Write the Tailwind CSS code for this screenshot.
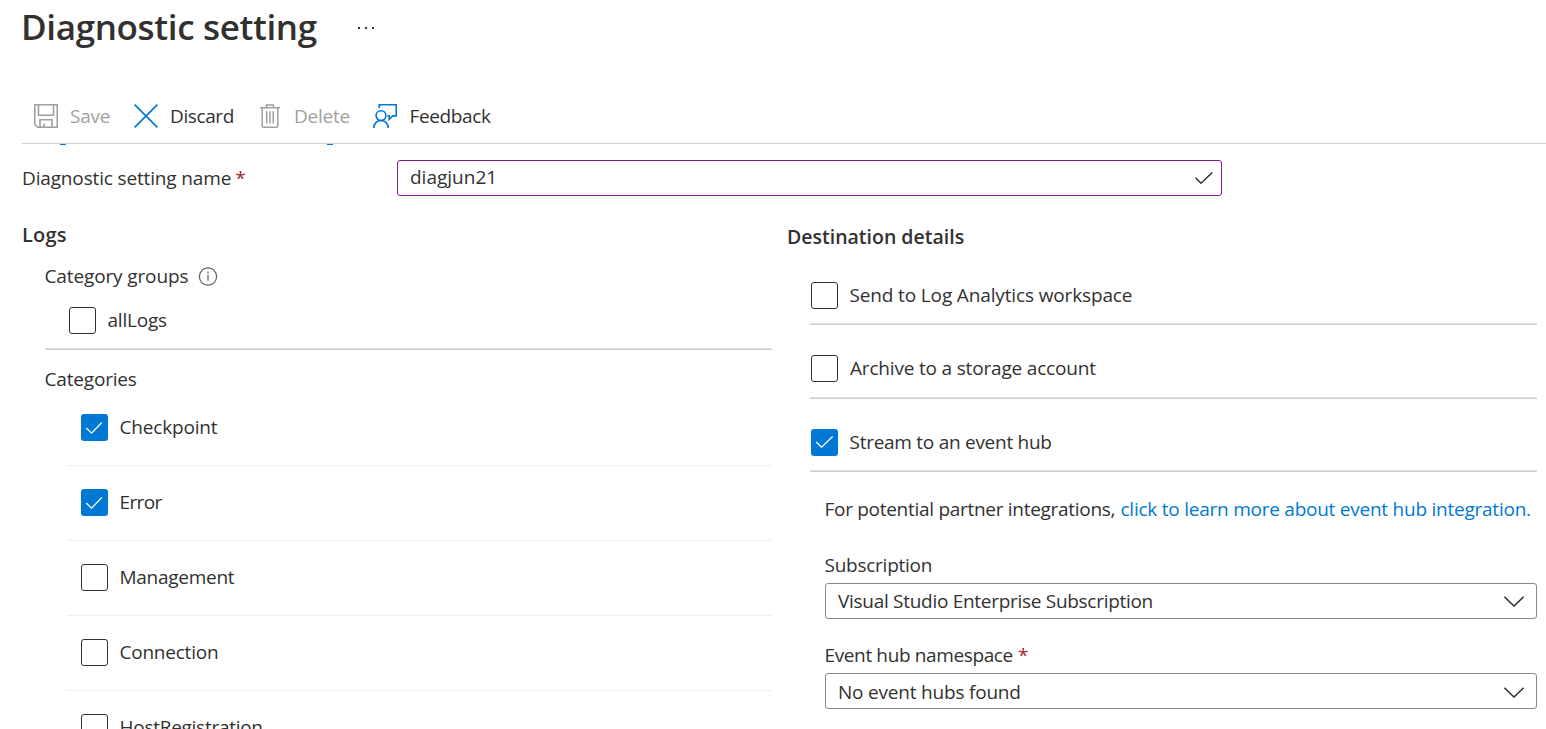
<!DOCTYPE html>
<html lang="en">
<head>
<meta charset="utf-8">
<title>Diagnostic setting</title>
<script src="https://cdn.jsdelivr.net/npm/@tailwindcss/browser@4"></script>
</head>
<body class="h-[729px] w-[1546px] overflow-hidden bg-white font-['Open_Sans','Noto_Sans',sans-serif] text-[19px] leading-[28px] whitespace-nowrap text-[#323130]">
<header class="flex h-[52px] items-center pl-[21px]">
  <h1 class="w-[336px] pt-0.5 text-[35px] font-semibold leading-[52px] tracking-[-0.35px]">Diagnostic setting</h1>
  <svg class="mt-1 h-1 w-[18px]" viewBox="0 0 18 4" fill="#323130"><path d="M1 1h2v2H1zM8 1h2v2H8zM15 1h2v2h-2z"/></svg>
</header>

<nav class="ml-[22px] mt-9 flex h-14 items-center border-b border-[#d0d0d0] pl-3">
  <div class="flex w-[100px] items-center text-[#a19f9d]">
    <svg class="mr-3 size-6" viewBox="0 0 24 24" fill="none" stroke="#a19f9d" stroke-width="1.6"><path d="M.75.75h22.5v22.5H3.8L.75 20.2zM4.5.75V11.3h15V.75M6 23.2v-7.5h12v7.5M10 23.2v-3.8"/></svg>
    <span class="tracking-[-0.2px]">Save</span>
  </div>
  <div class="flex w-[126px] items-center">
    <svg class="mr-3 size-6" viewBox="0 0 24 24" fill="none" stroke="#0078d4" stroke-width="1.7"><path d="M.6.6l22.8 22.8M23.4.6.6 23.4"/></svg>
    <span class="tracking-[-0.4px]">Discard</span>
  </div>
  <div class="flex w-[113px] items-center text-[#a19f9d]">
    <svg class="mr-3.5 h-6 w-5" viewBox="0 0 20 24" fill="none" stroke="#a19f9d" stroke-width="1.5"><path d="M0 3.7h20M6.5 3.5V.9h7v2.6M2.2 3.7v18.2q0 1.3 1.3 1.3h13q1.3 0 1.3-1.3V3.7M6.7 7.3v12.2M10 7.3v12.2M13.3 7.3v12.2"/></svg>
    <span class="tracking-[-0.25px]">Delete</span>
  </div>
  <div class="flex items-center">
    <svg class="mr-[12.5px] size-6" viewBox="0 0 24 24" fill="none" stroke="#0078d4" stroke-width="1.6"><circle cx="8" cy="11.6" r="4.9"/><path d="M.8 24c0-4.4 3.1-7.5 7.2-7.5s7.2 3.1 7.2 7.5M6.2 4V.8h17v11.1h-3.4l-3.6 3.5v-3.5h-1.8"/></svg>
    <span class="tracking-[-0.37px]">Feedback</span>
  </div>
</nav>

<main class="relative pt-4">
  <!-- lower edge of the link line scrolled beneath the toolbar -->
  <i class="absolute left-[60px] top-0 h-px w-[6px] bg-[#0078d4]"></i>
  <i class="absolute left-[327px] top-0 h-px w-[6px] bg-[#0078d4]"></i>

  <div class="flex h-9 pl-[22px]">
    <label class="w-[375px] leading-[37px]"><span class="tracking-[-0.15px]">Diagnostic setting name</span><span class="ml-1 text-[#a4262c]">*</span></label>
    <div class="flex h-9 w-[825px] items-center justify-between rounded-[3px] border border-[#881798] pl-3 pr-2">
      <span class="mb-0.5">diagjun21</span>
      <svg class="h-3 w-[18px]" viewBox="0 0 18 12" fill="none" stroke="#323130" stroke-width="1.5"><path d="M.5 5.8 6 11.2 17.3.5"/></svg>
    </div>
  </div>

  <div class="flex">
    <section class="w-[787px] pr-[15px] pt-[25px]">
      <h2 class="pl-[22px] text-[20px] font-semibold tracking-[0.2px]">Logs</h2>
      <div class="mt-[13px] flex items-center pl-[44.5px]">
        <span class="w-[153.5px] tracking-[-0.13px]">Category groups</span>
        <svg class="size-5" viewBox="0 0 20 20" fill="none" stroke="#605e5c" stroke-width="1.2"><circle cx="10" cy="10.5" r="8.6"/><path d="M10 8.6v6.2M10 5.6v1.6"/></svg>
      </div>
      <div class="mt-[17px] flex h-[27px] pl-[69px]">
        <span class="mr-[11.5px] size-[27px] rounded-[3px] border border-[#323130]"></span>
        <span class="-mt-px tracking-[-0.2px]">allLogs</span>
      </div>
      <div class="ml-[45px] mt-3.5 h-0.5 border-t border-[#e2e2e2] bg-[#cecece]"></div>
      <h3 class="mt-[17px] pl-[44.5px] leading-6 tracking-[-0.18px]">Categories</h3>
      <ul class="ml-[67px]">
        <li class="flex h-[75px] border-b border-[#f0efee] pl-3.5 pt-[23px]">
          <svg class="mr-[11.5px] size-[27px] rounded-[3px] bg-[#0078d4]" viewBox="0 0 27 27" fill="none" stroke="#fff" stroke-width="1.3"><path d="M5.2 14l5.4 5.2L20.8 8.5"/></svg>
          <span class="-mt-px tracking-[-0.18px]">Checkpoint</span></li>
        <li class="flex h-[75px] border-b border-[#f0efee] pl-3.5 pt-[23px]">
          <svg class="mr-[11.5px] size-[27px] rounded-[3px] bg-[#0078d4]" viewBox="0 0 27 27" fill="none" stroke="#fff" stroke-width="1.3"><path d="M5.2 14l5.4 5.2L20.8 8.5"/></svg>
          <span class="-mt-px tracking-[-0.6px]">Error</span></li>
        <li class="flex h-[75px] border-b border-[#f0efee] pl-3.5 pt-[23px]">
          <span class="mr-[11.5px] size-[27px] rounded-[3px] border border-[#323130]"></span>
          <span class="-mt-px tracking-[-0.27px]">Management</span></li>
        <li class="flex h-[75px] border-b border-[#f0efee] pl-3.5 pt-[23px]">
          <span class="mr-[11.5px] size-[27px] rounded-[3px] border border-[#323130]"></span>
          <span class="-mt-px tracking-[-0.23px]">Connection</span></li>
        <li class="flex h-[38px] overflow-hidden pl-3.5 pt-[23px]">
          <span class="mr-[11.5px] size-[27px] shrink-0 rounded-[3px] border border-[#323130]"></span>
          <span class="-mt-px tracking-[-0.27px]">HostRegistration</span></li>
      </ul>
    </section>

    <section class="w-[750px] pl-[23px] pt-[26px]">
      <h2 class="-ml-[23px] pt-px text-[19.5px] font-semibold leading-[27px]">Destination details</h2>
      <div class="mt-8 flex h-[27px] pl-px">
        <span class="mr-[11.5px] size-[27px] rounded-[3px] border border-[#323130]"></span>
        <span class="-mt-px tracking-[-0.14px]">Send to Log Analytics workspace</span>
      </div>
      <div class="mt-3.5 h-0.5 border-t border-[#e2e2e2] bg-[#cecece]"></div>
      <div class="mt-[30px] flex h-[27px] pl-px">
        <span class="mr-3 size-[27px] rounded-[3px] border border-[#323130]"></span>
        <span class="-mt-px tracking-[-0.18px]">Archive to a storage account</span>
      </div>
      <div class="mt-[15px] h-0.5 border-t border-[#e2e2e2] bg-[#cecece]"></div>
      <div class="mt-[30px] flex h-[27px] pl-px">
        <svg class="mr-[11.5px] size-[27px] rounded-[3px] bg-[#0078d4]" viewBox="0 0 27 27" fill="none" stroke="#fff" stroke-width="1.3"><path d="M5.2 13l5.4 5.2L21.6 7.5"/></svg>
        <span class="-mt-px tracking-[-0.27px]">Stream to an event hub</span>
      </div>
      <div class="mt-3.5 h-0.5 border-t border-[#e2e2e2] bg-[#cecece]"></div>

      <div class="pl-[15px]">
        <p class="-ml-[0.5px] mt-[23px] flex"><span class="w-[296px] tracking-[-0.29px]">For potential partner integrations,</span><a class="tracking-[-0.24px] text-[#0078d4]">click to learn more about event hub integration.</a></p>
        <div class="-ml-[0.5px] mt-7 tracking-[-0.25px]">Subscription</div>
        <div class="mt-1 flex h-9 items-center justify-between rounded-[3px] border border-[#8a8886] pl-3 pr-3">
          <span class="tracking-[-0.29px]">Visual Studio Enterprise Subscription</span>
          <svg class="mt-px h-[11px] w-5" viewBox="0 0 20 11" fill="none" stroke="#323130" stroke-width="1.5"><path d="M.4.8 10 10 19.6.8"/></svg>
        </div>
        <div class="-ml-[0.5px] mt-[22px]"><span class="tracking-[-0.37px]">Event hub namespace</span><span class="ml-[5px] text-[#a4262c]">*</span></div>
        <div class="mt-1 flex h-9 items-center justify-between rounded-[3px] border border-[#8a8886] pl-3 pr-3">
          <span class="mt-0.5 tracking-[-0.2px]">No event hubs found</span>
          <svg class="mt-0.5 h-[11px] w-5" viewBox="0 0 20 11" fill="none" stroke="#323130" stroke-width="1.5"><path d="M.4.8 10 10 19.6.8"/></svg>
        </div>
      </div>
    </section>
  </div>
</main>
</body>
</html>
